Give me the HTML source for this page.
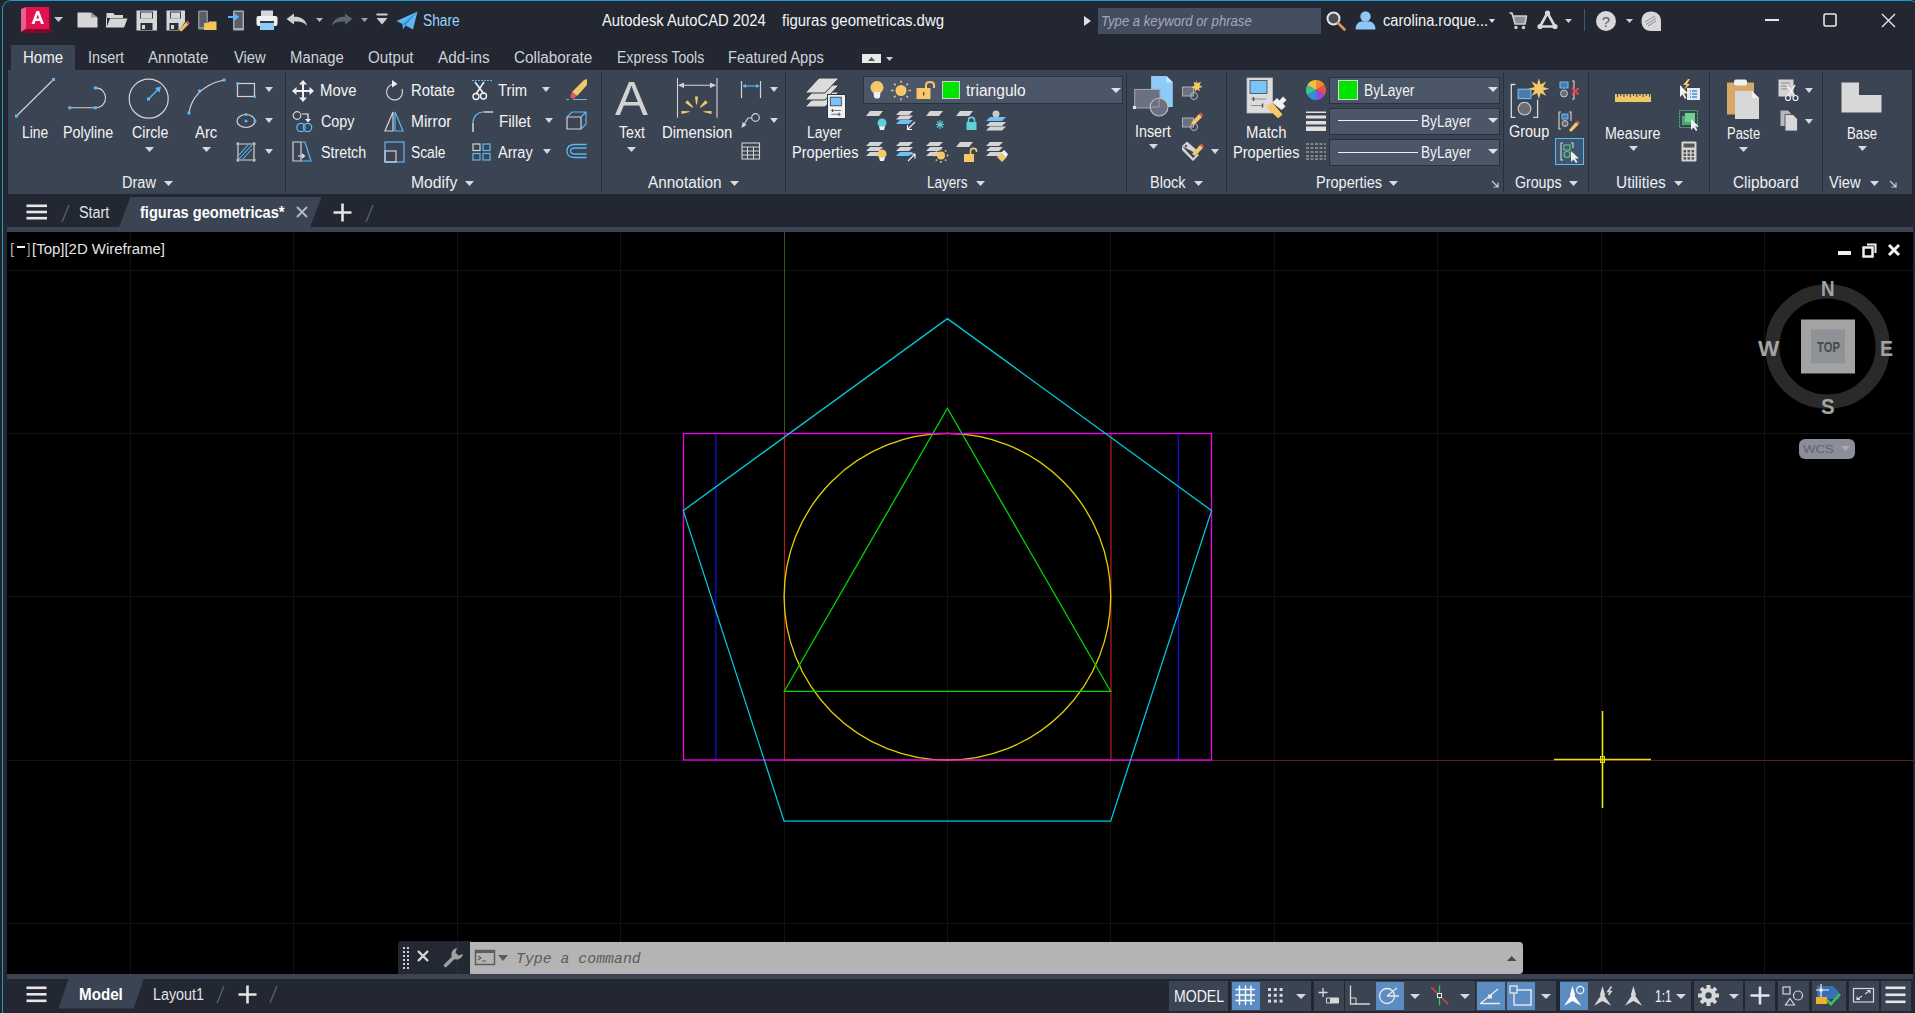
<!DOCTYPE html><html><head><meta charset="utf-8"><style>
html,body{margin:0;padding:0;width:1915px;height:1013px;overflow:hidden;background:#222732;}
.t{position:absolute;white-space:nowrap;transform-origin:0 0;}
.b{position:absolute;}
.s{position:absolute;overflow:visible;}
</style></head><body>
<div class="b" style="left:0px;top:0px;width:1915px;height:1013px;background:#222732;"></div><div class="b" style="left:7px;top:232px;width:1906px;height:742px;background:#000;"></div><div class="b" style="left:8px;top:70px;width:1904px;height:124px;background:#3b4453;"></div><div class="b" style="left:11px;top:45px;width:64px;height:25px;background:#3b4453;"></div><div class="b" style="left:7px;top:227px;width:1906px;height:5px;background:#3b4453;"></div><div class="b" style="left:7px;top:974px;width:1906px;height:5px;background:#3b4453;"></div><div class="b" style="left:0;top:0;width:3px;height:1013px;background:#272524"></div><svg class="s" style="left:0;top:0" width="14" height="14" viewBox="0 0 14 14"><path d="M0 0 H11.5 A9 9 0 0 0 2.5 9 V14 H0 Z" fill="#272524"/></svg><svg class="s" style="left:1900px;top:0" width="15" height="14" viewBox="1900 0 15 14"><path d="M1909 0 H1915 V14 H1918 V9 A9 9 0 0 0 1909 0 Z" fill="#272524"/></svg><div class="b" style="left:2px;top:0px;width:1917px;height:1100px;background:transparent;border-top:1px solid #1c9ad8;border-left:1px solid #1c9ad8;border-right:1px solid #1c9ad8;border-radius:9px 9px 0 0;box-sizing:border-box;"></div><svg class="s" style="left:20px;top:6px;" width="32" height="28" viewBox="0 0 32 28"><polygon points="1,3 6,1 6,23 1,26" fill="#e8608a"/><rect x="6" y="1" width="23" height="22" fill="#e3114f"/><polygon points="6,23 29,23 29,4 31,4 31,27 6,27" fill="#7d0a2a"/><polygon points="1,26 6,23 6,27" fill="#7d0a2a"/><path d="M11.5 18 L16.5 5 L19 5 L24 18 L21 18 L20 15 L15.5 15 L14.5 18 Z M16.3 12.6 L19.2 12.6 L17.75 8.3 Z" fill="#fff"/></svg><svg class="s" style="left:54.3px;top:17.0px;" width="9" height="5" viewBox="0 0 9 5"><polygon points="0,0 9,0 4.5,5" fill="#c8c8c8"/></svg><svg class="s" style="left:77px;top:12px;" width="21" height="16" viewBox="0 0 21 16"><path d="M0.5 0.5 H14 L20.5 5.5 V15.5 H0.5 Z" fill="#d6d6d6"/><path d="M14 0.5 V5.5 H20.5" fill="#9a9a9a"/></svg><svg class="s" style="left:106px;top:12px;" width="22" height="16" viewBox="0 0 22 16"><path d="M0.5 1 H7 L9 3 H17 V6 H0.5 Z" fill="#d6d6d6"/><path d="M0.5 15.5 L4 6.5 H21.5 L18 15.5 Z" fill="#d6d6d6"/><path d="M0.5 6 V15.5" stroke="#d6d6d6"/></svg><svg class="s" style="left:136px;top:10px;" width="22" height="21" viewBox="0 0 22 21"><path d="M0.5 0.5 H21 V20.5 H0.5 Z" fill="#d6d6d6"/><rect x="4" y="1.5" width="13" height="7" fill="#3a4050"/><rect x="5" y="2.5" width="11" height="6" fill="#d6d6d6"/><rect x="4.5" y="13" width="12" height="7" fill="#2a2f3a"/><rect x="6" y="15" width="3" height="4" fill="#d6d6d6"/></svg><svg class="s" style="left:166px;top:10px;" width="23" height="22" viewBox="0 0 23 22"><path d="M0.5 0.5 H19 V12 L13 20.5 H0.5 Z" fill="#d6d6d6"/><rect x="4" y="1.5" width="11" height="7" fill="#3a4050"/><rect x="5" y="2.5" width="9" height="6" fill="#d6d6d6"/><rect x="3.5" y="13" width="9" height="7" fill="#2a2f3a"/><rect x="5" y="15" width="3" height="4" fill="#d6d6d6"/><path d="M13 20 L20 12 L22.5 14.5 L15.5 21.5 Z" fill="#f0c060"/><path d="M20 12 L21.5 10.5 L24 13 L22.5 14.5Z" fill="#e04050"/></svg><svg class="s" style="left:197px;top:10px;" width="20" height="21" viewBox="0 0 20 21"><rect x="1" y="0.5" width="10" height="19" rx="1" fill="#8a8e94"/><rect x="2.5" y="2" width="7" height="15" fill="#5a5e66"/><path d="M7 13 H11 L12 11.5 H19.5 V20 H7 Z" fill="#f4c55a"/></svg><svg class="s" style="left:228px;top:10px;" width="18" height="21" viewBox="0 0 18 21"><rect x="5" y="0.5" width="11" height="20" rx="1" fill="#a8acb2"/><rect x="6.5" y="2" width="8" height="16" fill="#5a5e66"/><path d="M0 7 H9 M6 4 L9.5 7 L6 10" stroke="#5ab4f0" stroke-width="2.2" fill="none"/></svg><svg class="s" style="left:256px;top:10px;" width="22" height="21" viewBox="0 0 22 21"><rect x="5" y="0.5" width="12" height="6" fill="#d6d6d6"/><rect x="0.5" y="6" width="21" height="10" rx="2" fill="#f0f0f0"/><rect x="4" y="11" width="14" height="9" fill="#8ccbf5"/><rect x="4" y="11" width="14" height="2" fill="#333a46"/></svg><svg class="s" style="left:286px;top:13px;" width="22" height="14" viewBox="0 0 22 14"><path d="M0.5 6 L8 0.5 V3.8 C14 3.5 20 6 21 13 C18 9 14 8.5 8 8.5 V11.5 Z" fill="#d0d0d0"/></svg><svg class="s" style="left:315.5px;top:18.0px;" width="7" height="4" viewBox="0 0 7 4"><polygon points="0,0 7,0 3.5,4" fill="#b8b8b8"/></svg><svg class="s" style="left:331px;top:13px;" width="22" height="14" viewBox="0 0 22 14"><path d="M21.5 6 L14 0.5 V3.8 C8 3.5 2 6 1 13 C4 9 8 8.5 14 8.5 V11.5 Z" fill="#5e6470"/></svg><svg class="s" style="left:360.5px;top:18.0px;" width="7" height="4" viewBox="0 0 7 4"><polygon points="0,0 7,0 3.5,4" fill="#a0a0a0"/></svg><svg class="s" style="left:376px;top:13px;" width="12" height="13" viewBox="0 0 12 13"><rect x="0.5" y="0.5" width="11" height="2" fill="#d0d0d0"/><polygon points="0.5,5 11.5,5 6,11.5" fill="#d0d0d0"/></svg><svg class="s" style="left:396px;top:11px;" width="22" height="19" viewBox="0 0 22 19"><path d="M0.5 10 L21.5 0.5 L17 18.5 L9.5 14.5 L7 18.5 L6.5 13 Z" fill="#5cb6f2"/><path d="M6.5 13 L21.5 0.5 L9.5 14.5" fill="#3a8fd0"/></svg><div class="t" style="left:423.00px;top:13.00px;font-size:16px;line-height:16px;color:#9dd3ff;font-weight:normal;font-style:normal;font-family:'Liberation Sans', sans-serif;transform:scaleX(0.8571);">Share</div><div class="t" style="left:602.00px;top:13.00px;font-size:16px;line-height:16px;color:#f4f4f4;font-weight:normal;font-style:normal;font-family:'Liberation Sans', sans-serif;transform:scaleX(0.9249);">Autodesk AutoCAD 2024</div><div class="t" style="left:782.00px;top:13.00px;font-size:16px;line-height:16px;color:#f4f4f4;font-weight:normal;font-style:normal;font-family:'Liberation Sans', sans-serif;transform:scaleX(0.9343);">figuras geometricas.dwg</div><svg class="s" style="left:1084px;top:16px;" width="7" height="10" viewBox="0 0 7 10"><polygon points="0,0 7,5 0,10" fill="#e0e0e0"/></svg><div class="b" style="left:1098px;top:8px;width:223px;height:26px;background:#454e60;"></div><div class="t" style="left:1101.30px;top:13.00px;font-size:15px;line-height:15px;color:#a3a9b4;font-weight:normal;font-style:italic;font-family:'Liberation Sans', sans-serif;transform:scaleX(0.8746);">Type a keyword or phrase</div><svg class="s" style="left:1326px;top:11px;" width="20" height="20" viewBox="0 0 20 20"><circle cx="7.5" cy="7.5" r="6" fill="#4a4f58" stroke="#e6e6e6" stroke-width="2"/><path d="M12 12 L18.5 18.5" stroke="#d79a52" stroke-width="2.6" stroke-linecap="round"/></svg><svg class="s" style="left:1355px;top:11px;" width="21" height="19" viewBox="0 0 21 19"><circle cx="10.5" cy="5.5" r="5.2" fill="#8dc7f7"/><path d="M0.5 18.5 C0.5 13 4 10.5 7 10.5 H14 C17 10.5 20.5 13 20.5 18.5 Z" fill="#8dc7f7"/></svg><div class="t" style="left:1383.30px;top:13.00px;font-size:16px;line-height:16px;color:#f4f4f4;font-weight:normal;font-style:normal;font-family:'Liberation Sans', sans-serif;transform:scaleX(0.9154);">carolina.roque...</div><svg class="s" style="left:1489.3px;top:18.5px;" width="6" height="4" viewBox="0 0 6 4"><polygon points="0,0 6,0 3.0,4" fill="#e0e0e0"/></svg><svg class="s" style="left:1509px;top:12px;" width="18" height="18" viewBox="0 0 18 18"><path d="M0.5 1 H3 L6 12 H16 L17.5 4 H4" fill="#8d9096" stroke="#cfcfcf" stroke-width="1.6" stroke-linejoin="round"/><circle cx="7" cy="15.5" r="1.7" fill="#cfcfcf"/><circle cx="14.5" cy="15.5" r="1.7" fill="#cfcfcf"/></svg><svg class="s" style="left:1537px;top:10px;" width="21" height="20" viewBox="0 0 21 20"><path d="M10.5 3 L3 16.5 H18 Z" fill="none" stroke="#d8d8d8" stroke-width="2.6" stroke-linejoin="round"/><circle cx="10.5" cy="3" r="2.6" fill="#d8d8d8"/><circle cx="3" cy="16.5" r="2.6" fill="#d8d8d8"/><circle cx="18" cy="16.5" r="2.6" fill="#d8d8d8"/></svg><svg class="s" style="left:1564.5px;top:19.0px;" width="7" height="4" viewBox="0 0 7 4"><polygon points="0,0 7,0 3.5,4" fill="#d0d0d0"/></svg><div class="b" style="left:1584px;top:9px;width:1px;height:22px;background:#3c5674;"></div><svg class="s" style="left:1596px;top:11px;" width="21" height="20" viewBox="0 0 21 20"><circle cx="10" cy="10" r="10" fill="#d8d8d8"/><text x="10" y="15.5" text-anchor="middle" font-family="Liberation Sans" font-size="15" fill="#5a5e66">?</text></svg><svg class="s" style="left:1625.8px;top:19.0px;" width="7" height="4" viewBox="0 0 7 4"><polygon points="0,0 7,0 3.5,4" fill="#d0d0d0"/></svg><svg class="s" style="left:1641px;top:11px;" width="21" height="20" viewBox="0 0 21 20"><path d="M10 0.5 C16 0.5 20 4.5 20 10 V20 H10 C4 20 0.5 16 0.5 10 C0.5 4.5 4 0.5 10 0.5Z" fill="#d8d8d8"/><path d="M4 11 L14 5 M5 13.5 L15 7.5 M7 15 L15 10" stroke="#8a8e94" stroke-width="1"/></svg><div class="b" style="left:1765px;top:19px;width:14px;height:2px;background:#e8e8e8;"></div><svg class="s" style="left:1823px;top:13px;" width="14" height="14" viewBox="0 0 14 14"><rect x="1" y="1" width="12" height="12" rx="1.5" fill="none" stroke="#e8e8e8" stroke-width="1.6"/></svg><svg class="s" style="left:1881px;top:13px;" width="15" height="15" viewBox="0 0 15 15"><path d="M1 1 L14 14 M14 1 L1 14" stroke="#e8e8e8" stroke-width="1.4"/></svg><div class="t" style="left:22.90px;top:50.00px;font-size:16px;line-height:16px;color:#f0f0f0;font-weight:normal;font-style:normal;font-family:'Liberation Sans', sans-serif;transform:scaleX(0.9391);">Home</div><div class="t" style="left:88.00px;top:50.00px;font-size:16px;line-height:16px;color:#cfd3d9;font-weight:normal;font-style:normal;font-family:'Liberation Sans', sans-serif;transform:scaleX(0.9000);">Insert</div><div class="t" style="left:148.40px;top:50.00px;font-size:16px;line-height:16px;color:#cfd3d9;font-weight:normal;font-style:normal;font-family:'Liberation Sans', sans-serif;transform:scaleX(0.9407);">Annotate</div><div class="t" style="left:234.30px;top:50.00px;font-size:16px;line-height:16px;color:#cfd3d9;font-weight:normal;font-style:normal;font-family:'Liberation Sans', sans-serif;transform:scaleX(0.9215);">View</div><div class="t" style="left:290.30px;top:50.00px;font-size:16px;line-height:16px;color:#cfd3d9;font-weight:normal;font-style:normal;font-family:'Liberation Sans', sans-serif;transform:scaleX(0.9291);">Manage</div><div class="t" style="left:368.00px;top:50.00px;font-size:16px;line-height:16px;color:#cfd3d9;font-weight:normal;font-style:normal;font-family:'Liberation Sans', sans-serif;transform:scaleX(0.9479);">Output</div><div class="t" style="left:438.30px;top:50.00px;font-size:16px;line-height:16px;color:#cfd3d9;font-weight:normal;font-style:normal;font-family:'Liberation Sans', sans-serif;transform:scaleX(0.9521);">Add-ins</div><div class="t" style="left:513.90px;top:50.00px;font-size:16px;line-height:16px;color:#cfd3d9;font-weight:normal;font-style:normal;font-family:'Liberation Sans', sans-serif;transform:scaleX(0.9548);">Collaborate</div><div class="t" style="left:616.60px;top:50.00px;font-size:16px;line-height:16px;color:#cfd3d9;font-weight:normal;font-style:normal;font-family:'Liberation Sans', sans-serif;transform:scaleX(0.8781);">Express Tools</div><div class="t" style="left:728.00px;top:50.00px;font-size:16px;line-height:16px;color:#cfd3d9;font-weight:normal;font-style:normal;font-family:'Liberation Sans', sans-serif;transform:scaleX(0.9212);">Featured Apps</div><div class="b" style="left:862px;top:54px;width:19px;height:9px;background:#e8e8e8;"></div><svg class="s" style="left:868px;top:56.5px;" width="7" height="4" viewBox="0 0 7 4"><polygon points="0,4 7,4 3.5,0" fill="#555"/></svg><svg class="s" style="left:885.5px;top:56.5px;" width="7" height="4" viewBox="0 0 7 4"><polygon points="0,0 7,0 3.5,4" fill="#d0d0d0"/></svg><div class="b" style="left:285px;top:72px;width:1px;height:120px;background:#2a303b;"></div><div class="b" style="left:601px;top:72px;width:1px;height:120px;background:#2a303b;"></div><div class="b" style="left:785px;top:72px;width:1px;height:120px;background:#2a303b;"></div><div class="b" style="left:1126px;top:72px;width:1px;height:120px;background:#2a303b;"></div><div class="b" style="left:1226px;top:72px;width:1px;height:120px;background:#2a303b;"></div><div class="b" style="left:1503px;top:72px;width:1px;height:120px;background:#2a303b;"></div><div class="b" style="left:1588px;top:72px;width:1px;height:120px;background:#2a303b;"></div><div class="b" style="left:1709px;top:72px;width:1px;height:120px;background:#2a303b;"></div><div class="b" style="left:1822px;top:72px;width:1px;height:120px;background:#2a303b;"></div><div class="t" style="left:121.90px;top:175.00px;font-size:16px;line-height:16px;color:#eef0f2;font-weight:normal;font-style:normal;font-family:'Liberation Sans', sans-serif;transform:scaleX(0.9091);">Draw</div><svg class="s" style="left:163.5px;top:181.0px;" width="9" height="5" viewBox="0 0 9 5"><polygon points="0,0 9,0 4.5,5" fill="#dcdcdc"/></svg><div class="t" style="left:411.30px;top:175.00px;font-size:16px;line-height:16px;color:#eef0f2;font-weight:normal;font-style:normal;font-family:'Liberation Sans', sans-serif;transform:scaleX(0.9809);">Modify</div><svg class="s" style="left:465.1px;top:181.0px;" width="9" height="5" viewBox="0 0 9 5"><polygon points="0,0 9,0 4.5,5" fill="#dcdcdc"/></svg><div class="t" style="left:647.50px;top:175.00px;font-size:16px;line-height:16px;color:#eef0f2;font-weight:normal;font-style:normal;font-family:'Liberation Sans', sans-serif;transform:scaleX(0.9608);">Annotation</div><svg class="s" style="left:729.7px;top:181.0px;" width="9" height="5" viewBox="0 0 9 5"><polygon points="0,0 9,0 4.5,5" fill="#dcdcdc"/></svg><div class="t" style="left:927.40px;top:175.00px;font-size:16px;line-height:16px;color:#eef0f2;font-weight:normal;font-style:normal;font-family:'Liberation Sans', sans-serif;transform:scaleX(0.8458);">Layers</div><svg class="s" style="left:975.5px;top:181.0px;" width="9" height="5" viewBox="0 0 9 5"><polygon points="0,0 9,0 4.5,5" fill="#dcdcdc"/></svg><div class="t" style="left:1150.00px;top:175.00px;font-size:16px;line-height:16px;color:#eef0f2;font-weight:normal;font-style:normal;font-family:'Liberation Sans', sans-serif;transform:scaleX(0.9056);">Block</div><svg class="s" style="left:1193.7px;top:181.0px;" width="9" height="5" viewBox="0 0 9 5"><polygon points="0,0 9,0 4.5,5" fill="#dcdcdc"/></svg><div class="t" style="left:1315.60px;top:175.00px;font-size:16px;line-height:16px;color:#eef0f2;font-weight:normal;font-style:normal;font-family:'Liberation Sans', sans-serif;transform:scaleX(0.9067);">Properties</div><svg class="s" style="left:1388.9px;top:181.0px;" width="9" height="5" viewBox="0 0 9 5"><polygon points="0,0 9,0 4.5,5" fill="#dcdcdc"/></svg><div class="t" style="left:1514.50px;top:175.00px;font-size:16px;line-height:16px;color:#eef0f2;font-weight:normal;font-style:normal;font-family:'Liberation Sans', sans-serif;transform:scaleX(0.8857);">Groups</div><svg class="s" style="left:1568.5px;top:181.0px;" width="9" height="5" viewBox="0 0 9 5"><polygon points="0,0 9,0 4.5,5" fill="#dcdcdc"/></svg><div class="t" style="left:1615.50px;top:175.00px;font-size:16px;line-height:16px;color:#eef0f2;font-weight:normal;font-style:normal;font-family:'Liberation Sans', sans-serif;transform:scaleX(0.9632);">Utilities</div><svg class="s" style="left:1673.5px;top:181.0px;" width="9" height="5" viewBox="0 0 9 5"><polygon points="0,0 9,0 4.5,5" fill="#dcdcdc"/></svg><div class="t" style="left:1733.00px;top:175.00px;font-size:16px;line-height:16px;color:#eef0f2;font-weight:normal;font-style:normal;font-family:'Liberation Sans', sans-serif;transform:scaleX(0.9591);">Clipboard</div><div class="t" style="left:1829.30px;top:175.00px;font-size:16px;line-height:16px;color:#eef0f2;font-weight:normal;font-style:normal;font-family:'Liberation Sans', sans-serif;transform:scaleX(0.9157);">View</div><svg class="s" style="left:1869.5px;top:181.0px;" width="9" height="5" viewBox="0 0 9 5"><polygon points="0,0 9,0 4.5,5" fill="#dcdcdc"/></svg><svg class="s" style="left:1491px;top:180px;" width="8" height="8" viewBox="0 0 8 8"><path d="M1 1 L7 7 M7 2.5 V7 H2.5" stroke="#cfcfcf" stroke-width="1.2" fill="none"/></svg><svg class="s" style="left:1889px;top:180px;" width="8" height="8" viewBox="0 0 8 8"><path d="M1 1 L7 7 M7 2.5 V7 H2.5" stroke="#cfcfcf" stroke-width="1.2" fill="none"/></svg><svg class="s" style="left:14px;top:77px;" width="42" height="42" viewBox="0 0 42 42"><line x1="2.5" y1="39" x2="39.5" y2="2.5" stroke="#d4d4d4" stroke-width="1.2"/><rect x="1.0" y="37.5" width="3" height="3" fill="#5ab8f5"/><rect x="38.0" y="1.0" width="3" height="3" fill="#5ab8f5"/></svg><div class="t" style="left:21.50px;top:125.00px;font-size:16px;line-height:16px;color:#f4f4f4;font-weight:normal;font-style:normal;font-family:'Liberation Sans', sans-serif;transform:scaleX(0.8680);">Line</div><svg class="s" style="left:66px;top:82px;" width="44" height="30" viewBox="0 0 44 30"><path d="M3.7 25.8 H29 M29.3 5.9 C43 5.9 43 25.8 29.3 25.8" fill="none" stroke="#d4d4d4" stroke-width="1.1"/><rect x="2.2" y="24.3" width="3" height="3" fill="#5ab8f5"/><rect x="27.8" y="24.3" width="3" height="3" fill="#5ab8f5"/><rect x="27.8" y="4.4" width="3" height="3" fill="#5ab8f5"/></svg><div class="t" style="left:62.70px;top:125.00px;font-size:16px;line-height:16px;color:#f4f4f4;font-weight:normal;font-style:normal;font-family:'Liberation Sans', sans-serif;transform:scaleX(0.8946);">Polyline</div><svg class="s" style="left:128px;top:77px;" width="42" height="42" viewBox="0 0 42 42"><circle cx="20.7" cy="21.7" r="19.5" fill="none" stroke="#d4d4d4" stroke-width="1.2"/><path d="M20.5 22 L31 11.5" stroke="#5ab8f5" stroke-width="1.4"/><polygon points="33,9.5 27,11 31.5,15.5" fill="#5ab8f5"/><rect x="19.0" y="20.5" width="3" height="3" fill="#5ab8f5"/></svg><div class="t" style="left:131.60px;top:125.00px;font-size:16px;line-height:16px;color:#f4f4f4;font-weight:normal;font-style:normal;font-family:'Liberation Sans', sans-serif;transform:scaleX(0.8900);">Circle</div><svg class="s" style="left:144.5px;top:146.5px;" width="9" height="5" viewBox="0 0 9 5"><polygon points="0,0 9,0 4.5,5" fill="#d8d8d8"/></svg><svg class="s" style="left:185px;top:77px;" width="44" height="42" viewBox="0 0 44 42"><path d="M4 36 C6 22 16 8 39 3" fill="none" stroke="#d4d4d4" stroke-width="1.2"/><rect x="2.5" y="34.5" width="3" height="3" fill="#5ab8f5"/><rect x="13.0" y="12.5" width="3" height="3" fill="#5ab8f5"/><rect x="37.5" y="1.5" width="3" height="3" fill="#5ab8f5"/></svg><div class="t" style="left:195.00px;top:125.00px;font-size:16px;line-height:16px;color:#f4f4f4;font-weight:normal;font-style:normal;font-family:'Liberation Sans', sans-serif;transform:scaleX(0.9292);">Arc</div><svg class="s" style="left:201.5px;top:146.5px;" width="9" height="5" viewBox="0 0 9 5"><polygon points="0,0 9,0 4.5,5" fill="#d8d8d8"/></svg><svg class="s" style="left:235px;top:81px;" width="22" height="18" viewBox="0 0 22 18"><rect x="2.5" y="2.5" width="17" height="13" fill="none" stroke="#d4d4d4" stroke-width="1.2"/><rect x="1.2" y="1.2" width="2.6" height="2.6" fill="#5ab8f5"/><rect x="18.2" y="14.2" width="2.6" height="2.6" fill="#5ab8f5"/></svg><svg class="s" style="left:265.0px;top:86.8px;" width="8" height="5" viewBox="0 0 8 5"><polygon points="0,0 8,0 4.0,5" fill="#d8d8d8"/></svg><svg class="s" style="left:235px;top:112px;" width="22" height="18" viewBox="0 0 22 18"><ellipse cx="11" cy="9" rx="9" ry="6.5" fill="none" stroke="#d4d4d4" stroke-width="1.2"/><rect x="9.7" y="7.7" width="2.6" height="2.6" fill="#5ab8f5"/><rect x="9.7" y="1.2" width="2.6" height="2.6" fill="#5ab8f5"/><rect x="18.7" y="7.7" width="2.6" height="2.6" fill="#5ab8f5"/></svg><svg class="s" style="left:265.0px;top:117.8px;" width="8" height="5" viewBox="0 0 8 5"><polygon points="0,0 8,0 4.0,5" fill="#d8d8d8"/></svg><svg class="s" style="left:235px;top:141px;" width="22" height="22" viewBox="0 0 22 22"><path d="M3 1 V21 M19 1 V21 M1 3 H21 M1 19 H21" stroke="#d4d4d4" stroke-width="1.2"/><path d="M4 14 L13 4 M4 18 L17 4 M8 18 L17 8" stroke="#5ab8f5" stroke-width="1.1"/></svg><svg class="s" style="left:265.0px;top:148.8px;" width="8" height="5" viewBox="0 0 8 5"><polygon points="0,0 8,0 4.0,5" fill="#d8d8d8"/></svg><svg class="s" style="left:292px;top:80px;" width="22" height="22" viewBox="0 0 22 22"><path d="M11 1 V21 M1 11 H21" stroke="#f0f0f0" stroke-width="2"/><polygon points="11,0 7,4.5 15,4.5" fill="#f0f0f0"/><polygon points="11,22 7,17.5 15,17.5" fill="#f0f0f0"/><polygon points="0,11 4.5,7 4.5,15" fill="#f0f0f0"/><polygon points="22,11 17.5,7 17.5,15" fill="#f0f0f0"/></svg><div class="t" style="left:319.60px;top:83.00px;font-size:16px;line-height:16px;color:#f4f4f4;font-weight:normal;font-style:normal;font-family:'Liberation Sans', sans-serif;transform:scaleX(0.9309);">Move</div><svg class="s" style="left:384px;top:79px;" width="21" height="22" viewBox="0 0 21 22"><path d="M9.5 5 A8 8 0 1 0 18 10" fill="none" stroke="#d4d4d4" stroke-width="1.2"/><polygon points="8,1 13.5,5 8,8.5" fill="#f0f0f0"/></svg><div class="t" style="left:411.30px;top:83.00px;font-size:16px;line-height:16px;color:#f4f4f4;font-weight:normal;font-style:normal;font-family:'Liberation Sans', sans-serif;transform:scaleX(0.9278);">Rotate</div><svg class="s" style="left:471px;top:79px;" width="23" height="22" viewBox="0 0 23 22"><path d="M1 1.5 H22" stroke="#5ab8f5" stroke-width="1.2" stroke-dasharray="2 1"/><path d="M4 3 L13 15 M13 3 L5 15" stroke="#f0f0f0" stroke-width="1.6"/><circle cx="5" cy="17.5" r="3" fill="none" stroke="#f0f0f0" stroke-width="1.4"/><circle cx="12.5" cy="17" r="3" fill="none" stroke="#f0f0f0" stroke-width="1.4"/></svg><div class="t" style="left:498.00px;top:83.00px;font-size:16px;line-height:16px;color:#f4f4f4;font-weight:normal;font-style:normal;font-family:'Liberation Sans', sans-serif;transform:scaleX(0.9236);">Trim</div><svg class="s" style="left:541.5px;top:87.0px;" width="8" height="5" viewBox="0 0 8 5"><polygon points="0,0 8,0 4.0,5" fill="#d8d8d8"/></svg><svg class="s" style="left:566px;top:79px;" width="22" height="22" viewBox="0 0 22 22"><path d="M21 0 L21 6 L11 17 L6 13 L18 1 Z" fill="#f0c868"/><path d="M6 13 L11 17 L8 19.5 C6 20.5 4 19 4.5 16.5Z" fill="#e8505a"/><path d="M0 20.5 H3 M7 20.5 H21" stroke="#5ab8f5" stroke-width="1.2"/></svg><svg class="s" style="left:292px;top:111px;" width="22" height="22" viewBox="0 0 22 22"><circle cx="5" cy="4.5" r="3.8" fill="none" stroke="#d4d4d4" stroke-width="1.2"/><path d="M10 3 H16 V9" fill="none" stroke="#f0f0f0" stroke-width="1.2"/><polygon points="13,8 19,8 16,11.5" fill="#f0f0f0"/><circle cx="9" cy="16.5" r="4.2" fill="none" stroke="#5ab8f5" stroke-width="1.3"/><circle cx="15.5" cy="16.5" r="4.2" fill="none" stroke="#5ab8f5" stroke-width="1.3"/></svg><div class="t" style="left:320.50px;top:114.00px;font-size:16px;line-height:16px;color:#f4f4f4;font-weight:normal;font-style:normal;font-family:'Liberation Sans', sans-serif;transform:scaleX(0.8957);">Copy</div><svg class="s" style="left:384px;top:111px;" width="20" height="21" viewBox="0 0 20 21"><path d="M9 1 L1 20 H9 Z" fill="none" stroke="#d4d4d4" stroke-width="1.2"/><path d="M11 1 L19 20 H11 Z" fill="none" stroke="#5ab8f5" stroke-width="1.2"/></svg><div class="t" style="left:410.50px;top:114.00px;font-size:16px;line-height:16px;color:#f4f4f4;font-weight:normal;font-style:normal;font-family:'Liberation Sans', sans-serif;transform:scaleX(0.9689);">Mirror</div><svg class="s" style="left:472px;top:111px;" width="22" height="22" viewBox="0 0 22 22"><path d="M1 21 V12 C1 6 5 1 12 1 H21" fill="none" stroke="#5ab8f5" stroke-width="1.2"/><path d="M12 1 H21" stroke="#d4d4d4" stroke-width="1.2"/><path d="M1 12 V21" stroke="#d4d4d4" stroke-width="1.2"/></svg><div class="t" style="left:499.20px;top:114.00px;font-size:16px;line-height:16px;color:#f4f4f4;font-weight:normal;font-style:normal;font-family:'Liberation Sans', sans-serif;transform:scaleX(0.9408);">Fillet</div><svg class="s" style="left:545.0px;top:118.0px;" width="8" height="5" viewBox="0 0 8 5"><polygon points="0,0 8,0 4.0,5" fill="#d8d8d8"/></svg><svg class="s" style="left:566px;top:111px;" width="22" height="19" viewBox="0 0 22 19"><path d="M1 6 H15 V18 H1 Z" fill="none" stroke="#d4d4d4" stroke-width="1.2"/><path d="M1 6 L6 1 H20 V13 L15 18 M15 6 L20 1" fill="none" stroke="#5ab8f5" stroke-width="1.2"/></svg><svg class="s" style="left:292px;top:141px;" width="22" height="22" viewBox="0 0 22 22"><path d="M1 1 H9 V20 H1 Z" fill="none" stroke="#d4d4d4" stroke-width="1.2"/><path d="M9 1 H13 L19 20 H9" fill="none" stroke="#5ab8f5" stroke-width="1.2"/><path d="M6 15 H12 M10 13 L12.5 15 L10 17" stroke="#f0f0f0" stroke-width="1.1" fill="none"/></svg><div class="t" style="left:320.50px;top:145.00px;font-size:16px;line-height:16px;color:#f4f4f4;font-weight:normal;font-style:normal;font-family:'Liberation Sans', sans-serif;transform:scaleX(0.8915);">Stretch</div><svg class="s" style="left:384px;top:141px;" width="21" height="22" viewBox="0 0 21 22"><rect x="1" y="1" width="19" height="20" fill="none" stroke="#5ab8f5" stroke-width="1.2"/><rect x="1" y="10" width="11" height="11" fill="none" stroke="#d4d4d4" stroke-width="1.2"/></svg><div class="t" style="left:410.50px;top:145.00px;font-size:16px;line-height:16px;color:#f4f4f4;font-weight:normal;font-style:normal;font-family:'Liberation Sans', sans-serif;transform:scaleX(0.8625);">Scale</div><svg class="s" style="left:472px;top:143px;" width="20" height="18" viewBox="0 0 20 18"><rect x="1" y="1" width="7" height="6.5" fill="none" stroke="#d4d4d4" stroke-width="1.2"/><rect x="11" y="1" width="7" height="6.5" fill="none" stroke="#5ab8f5" stroke-width="1.2"/><rect x="1" y="10.5" width="7" height="6.5" fill="none" stroke="#5ab8f5" stroke-width="1.2"/><rect x="11" y="10.5" width="7" height="6.5" fill="none" stroke="#5ab8f5" stroke-width="1.2"/></svg><div class="t" style="left:498.30px;top:145.00px;font-size:16px;line-height:16px;color:#f4f4f4;font-weight:normal;font-style:normal;font-family:'Liberation Sans', sans-serif;transform:scaleX(0.9084);">Array</div><svg class="s" style="left:543.0px;top:149.0px;" width="8" height="5" viewBox="0 0 8 5"><polygon points="0,0 8,0 4.0,5" fill="#d8d8d8"/></svg><svg class="s" style="left:566px;top:143px;" width="22" height="16" viewBox="0 0 22 16"><path d="M20.5 1.5 H9 C4 1.5 1 4 1 8 C1 12 4 14.5 9 14.5 H20.5" fill="none" stroke="#5ab8f5" stroke-width="1.3"/><path d="M20.5 5 H9 C6 5 4.5 6.5 4.5 8 C4.5 9.5 6 11 9 11 H20.5" fill="none" stroke="#5ab8f5" stroke-width="1.3"/></svg><div class="t" style="left:614.60px;top:75.00px;font-size:48px;line-height:48px;color:#d2d2d2;font-weight:normal;font-style:normal;font-family:'Liberation Sans', sans-serif;transform:scaleX(1.0281);">A</div><div class="t" style="left:619.00px;top:125.00px;font-size:16px;line-height:16px;color:#f4f4f4;font-weight:normal;font-style:normal;font-family:'Liberation Sans', sans-serif;transform:scaleX(0.8840);">Text</div><svg class="s" style="left:626.5px;top:146.5px;" width="9" height="5" viewBox="0 0 9 5"><polygon points="0,0 9,0 4.5,5" fill="#d8d8d8"/></svg><svg class="s" style="left:676px;top:77px;" width="43" height="42" viewBox="0 0 43 42"><path d="M1.5 1 V40.8 M41 1 V40.8" stroke="#d4d4d4" stroke-width="1.1"/><path d="M3 8.3 H39" stroke="#d4d4d4" stroke-width="1.1"/><polygon points="2,8.3 8,5.5 8,11" fill="#d4d4d4"/><polygon points="40,8.3 34,5.5 34,11" fill="#d4d4d4"/><polygon points="19,19.5 22,19.5 21,27.5 20,27.5" fill="#f6c86a"/><polygon points="9.2,25.8 11.6,23.2 17.2,30 16.4,30.8" fill="#f6c86a"/><polygon points="31.8,25.8 29.4,23.2 23.8,30 24.6,30.8" fill="#f6c86a"/><polygon points="5.5,34 5.5,37 13.5,35 13.5,34.2" fill="#f6c86a"/><polygon points="35.5,34 35.5,37 27.5,35 27.5,34.2" fill="#f6c86a"/></svg><div class="t" style="left:661.70px;top:125.00px;font-size:16px;line-height:16px;color:#f4f4f4;font-weight:normal;font-style:normal;font-family:'Liberation Sans', sans-serif;transform:scaleX(0.9299);">Dimension</div><svg class="s" style="left:740px;top:80px;" width="22" height="19" viewBox="0 0 22 19"><path d="M1.5 1 V18 M20.5 1 V18" stroke="#d4d4d4" stroke-width="1.2"/><path d="M3 6 H19" stroke="#5ab8f5" stroke-width="1.2"/><polygon points="2.5,6 6,4 6,8" fill="#5ab8f5"/><polygon points="19.5,6 16,4 16,8" fill="#5ab8f5"/></svg><svg class="s" style="left:770.0px;top:87.0px;" width="8" height="5" viewBox="0 0 8 5"><polygon points="0,0 8,0 4.0,5" fill="#d8d8d8"/></svg><svg class="s" style="left:741px;top:112px;" width="20" height="17" viewBox="0 0 20 17"><circle cx="14.5" cy="5.5" r="3.8" fill="none" stroke="#d4d4d4" stroke-width="1.2"/><path d="M11 6 L7 6 L2 14" fill="none" stroke="#d4d4d4" stroke-width="1.2"/><polygon points="0.5,16 1.5,10 5.5,13" fill="#d4d4d4"/></svg><svg class="s" style="left:770.0px;top:118.0px;" width="8" height="5" viewBox="0 0 8 5"><polygon points="0,0 8,0 4.0,5" fill="#d8d8d8"/></svg><svg class="s" style="left:741px;top:142px;" width="20" height="18" viewBox="0 0 20 18"><rect x="1" y="1" width="17.5" height="16" fill="none" stroke="#d4d4d4" stroke-width="1.1"/><path d="M1 5 H18.5 M1 9 H18.5 M1 13 H18.5 M6.5 5 V17 M12.5 5 V17" stroke="#d4d4d4" stroke-width="1"/></svg><svg class="s" style="left:804px;top:77px;" width="43" height="42" viewBox="0 0 43 42"><g stroke="#2e3542" stroke-width="1" fill="#dcdcdc"><polygon points="15,15 35,15 21,30 1,30"/><polygon points="15,8 35,8 21,23 1,23"/><polygon points="15,1 35.1,1 20.9,16 1,16"/></g><rect x="23.5" y="17.5" width="18" height="24" fill="#f0f0f0" stroke="#2e3542" stroke-width="1"/><rect x="26.3" y="20.2" width="11" height="8.6" fill="#76c4fa" stroke="#333" stroke-width="0.8"/><path d="M27.3 33.5 H36.8 M27.3 37.3 H36.8" stroke="#666" stroke-width="0.9"/><path d="M28.5 32 V35 M35 35.8 V38.8" stroke="#555" stroke-width="1.3"/></svg><div class="t" style="left:807.30px;top:125.00px;font-size:16px;line-height:16px;color:#f4f4f4;font-weight:normal;font-style:normal;font-family:'Liberation Sans', sans-serif;transform:scaleX(0.8675);">Layer</div><div class="t" style="left:791.50px;top:145.00px;font-size:16px;line-height:16px;color:#f4f4f4;font-weight:normal;font-style:normal;font-family:'Liberation Sans', sans-serif;transform:scaleX(0.9122);">Properties</div><div class="b" style="left:863px;top:76px;width:260px;height:28px;background:#4b5669;border:1px solid #2b313c;box-sizing:border-box;"></div><svg class="s" style="left:870px;top:81px;" width="15" height="19" viewBox="0 0 15 19"><circle cx="7" cy="6.5" r="6.5" fill="#f6c86a"/><path d="M3.5 11 H10.5 L10 16 C9 18 5 18 4 16Z" fill="#f0f0f0"/></svg><svg class="s" style="left:890px;top:80px;" width="22" height="21" viewBox="0 0 22 21"><circle cx="11" cy="10.5" r="5.5" fill="#f6c86a"/><line x1="18.5" y1="10.5" x2="21.0" y2="10.5" stroke="#f6c86a" stroke-width="1.3"/><line x1="16.305412018753998" y1="15.801188858290246" x2="18.073882691671997" y2="17.56825181105366" stroke="#f6c86a" stroke-width="1.3"/><line x1="11.0059724503305" y1="17.99999762198876" x2="11.007963267107332" y2="20.49999682931835" stroke="#f6c86a" stroke-width="1.3"/><line x1="5.703037663849961" y1="15.809631814863241" x2="3.9373835517999485" y2="17.57950908648432" stroke="#f6c86a" stroke-width="1.3"/><line x1="3.5000095120434533" y1="10.51194489687365" x2="1.0000126827246056" y2="10.515926529164869" stroke="#f6c86a" stroke-width="1.3"/><line x1="5.686151756057954" y1="5.207267544986425" x2="3.9148690080772717" y2="3.443023393315233" stroke="#f6c86a" stroke-width="1.3"/><line x1="10.982082664157888" y1="3.0000214020921154" x2="10.976110218877185" y2="0.5000285361228194" stroke="#f6c86a" stroke-width="1.3"/><line x1="16.28849921756317" y1="5.181938696683374" x2="18.05133229008423" y2="3.4092515955778318" stroke="#f6c86a" stroke-width="1.3"/></svg><svg class="s" style="left:916px;top:80px;" width="20" height="20" viewBox="0 0 20 20"><rect x="0.5" y="8" width="14" height="11" fill="#f6c86a"/><path d="M10 8 V5 C10 1 18 1 18 5 V8" fill="none" stroke="#f6c86a" stroke-width="2"/><rect x="7" y="12" width="1.3" height="3.5" fill="#5a4a2a"/></svg><div class="b" style="left:942px;top:81px;width:18px;height:18px;background:#00e400;border:1px solid #d0d0d0;box-sizing:border-box;"></div><div class="t" style="left:966.10px;top:83.00px;font-size:16px;line-height:16px;color:#f4f4f4;font-weight:normal;font-style:normal;font-family:'Liberation Sans', sans-serif;transform:scaleX(0.9723);">triangulo</div><svg class="s" style="left:1111.0px;top:88.0px;" width="10" height="5" viewBox="0 0 10 5"><polygon points="0,0 10,0 5.0,5" fill="#e0e0e0"/></svg><svg class="s" style="left:866px;top:110px;" width="22" height="21" viewBox="0 0 22 21"><polygon points="4,1 17,1 13,6 0,6" fill="#d4d4d4"/><circle cx="16" cy="13" r="4.5" fill="#5fd0d8"/><path d="M13 16.5 H19 L18 20 H14 Z" fill="#f0f0f0"/></svg><svg class="s" style="left:896px;top:110px;" width="22" height="21" viewBox="0 0 22 21"><polygon points="4,1 17,1 13,5 0,5" fill="#d4d4d4"/><polygon points="4,5.5 17,5.5 13,9.5 0,9.5" fill="#d4d4d4"/><polygon points="4,10 17,10 13,14 0,14" fill="#6fc0f5"/><path d="M19 12 L12 19 M11.5 15 V19.5 H16" stroke="#f0f0f0" stroke-width="1.2" fill="none"/></svg><svg class="s" style="left:926px;top:110px;" width="22" height="21" viewBox="0 0 22 21"><polygon points="4,1 17,1 13,6 0,6" fill="#d4d4d4"/><g stroke="#5fd0d8" stroke-width="1.1"><path d="M14 10 V19 M10 14.5 H18 M11 11.5 L17 17.5 M17 11.5 L11 17.5"/></g></svg><svg class="s" style="left:956px;top:110px;" width="22" height="21" viewBox="0 0 22 21"><polygon points="4,1 17,1 13,6 0,6" fill="#d4d4d4"/><rect x="10.5" y="12" width="10" height="8" fill="#5fd0d8"/><path d="M12.5 12 V10 C12.5 6.5 18.5 6.5 18.5 10 V12" fill="none" stroke="#5fd0d8" stroke-width="1.6"/></svg><svg class="s" style="left:986px;top:110px;" width="22" height="21" viewBox="0 0 22 21"><circle cx="10" cy="4" r="3.5" fill="#c8c8c8"/><polygon points="4,7 20,7 16,11 0,11" fill="#6fc0f5"/><polygon points="4,12 20,12 16,16 0,16" fill="#d4d4d4"/><polygon points="4,16.5 20,16.5 16,20.5 0,20.5" fill="#d4d4d4"/></svg><svg class="s" style="left:866px;top:141px;" width="22" height="22" viewBox="0 0 22 22"><polygon points="4,1 17,1 13,5 0,5" fill="#d4d4d4"/><polygon points="4,6 17,6 13,10 0,10" fill="#d4d4d4"/><polygon points="4,11 17,11 13,15 0,15" fill="#d4d4d4"/><circle cx="16" cy="13" r="4.5" fill="#f6c86a"/><path d="M13 16.5 H19 L18 20 H14 Z" fill="#f0f0f0"/></svg><svg class="s" style="left:896px;top:141px;" width="22" height="22" viewBox="0 0 22 22"><polygon points="4,1 17,1 13,5 0,5" fill="#d4d4d4"/><polygon points="4,6 17,6 13,10 0,10" fill="#d4d4d4"/><polygon points="4,11 17,11 13,15 0,15" fill="#6fc0f5"/><path d="M12 20 L19 13 M14.5 13 H19 V17.5" stroke="#f0f0f0" stroke-width="1.2" fill="none"/></svg><svg class="s" style="left:926px;top:141px;" width="22" height="22" viewBox="0 0 22 22"><polygon points="4,1 17,1 13,5 0,5" fill="#d4d4d4"/><polygon points="4,6 17,6 13,10 0,10" fill="#d4d4d4"/><polygon points="4,11 17,11 13,15 0,15" fill="#d4d4d4"/><circle cx="15" cy="14.5" r="4" fill="#f6c86a"/><circle cx="21.5" cy="14.5" r="0.9" fill="#f6c86a"/><circle cx="19.598023749586797" cy="19.09436367718488" r="0.9" fill="#f6c86a"/><circle cx="15.005176123619766" cy="20.999997939056925" r="0.9" fill="#f6c86a"/><circle cx="10.409299308669965" cy="19.10168090621481" r="0.9" fill="#f6c86a"/><circle cx="8.500008243770992" cy="14.510352243957165" r="0.9" fill="#f6c86a"/><circle cx="10.394664855250227" cy="9.912965205654901" r="0.9" fill="#f6c86a"/><circle cx="14.98447164227017" cy="8.000018548479833" r="0.9" fill="#f6c86a"/><circle cx="19.583365988554746" cy="9.891013537125591" r="0.9" fill="#f6c86a"/></svg><svg class="s" style="left:956px;top:141px;" width="22" height="22" viewBox="0 0 22 22"><polygon points="4,1 17,1 13,6 0,6" fill="#d4d4d4"/><rect x="8" y="13" width="10" height="8" fill="#f6c86a"/><path d="M14.5 13 V10 C14.5 6.5 20.5 6.5 20.5 10 V11" fill="none" stroke="#f6c86a" stroke-width="1.6"/></svg><svg class="s" style="left:986px;top:141px;" width="22" height="22" viewBox="0 0 22 22"><polygon points="4,1 17,1 13,5 0,5" fill="#d4d4d4"/><polygon points="4,6 17,6 13,10 0,10" fill="#d4d4d4"/><polygon points="4,11 17,11 13,15 0,15" fill="#d4d4d4"/><path d="M11 16 L15 12 L20 17 L16 21 Z" fill="#f6c86a"/><path d="M15 12 L18 9 L22 13 L20 17Z" fill="#f0f0f0"/></svg><svg class="s" style="left:1132px;top:75px;" width="42" height="42" viewBox="0 0 42 42"><path d="M19.1 1 H34.5 L40.8 7.3 V32.1 H19.1 Z" fill="#8dcbf8"/><path d="M34.5 1 V7.3 H40.8 Z" fill="#cfe8fb"/><rect x="2.7" y="14.4" width="25.3" height="18.6" fill="#6a7282" stroke="#a8a8a8" stroke-width="1"/><circle cx="27.1" cy="32.1" r="8.9" fill="#6a7080" stroke="#c0c0c0" stroke-width="1.1"/><path d="M27.1 23.2 V32.1 H18.2" fill="none" stroke="#a8a8a8" stroke-width="0.9"/><rect x="0.9" y="31" width="3" height="3" fill="#e8e8e8"/></svg><div class="t" style="left:1135.40px;top:124.00px;font-size:16px;line-height:16px;color:#f4f4f4;font-weight:normal;font-style:normal;font-family:'Liberation Sans', sans-serif;transform:scaleX(0.8950);">Insert</div><svg class="s" style="left:1148.5px;top:144.0px;" width="9" height="5" viewBox="0 0 9 5"><polygon points="0,0 9,0 4.5,5" fill="#d8d8d8"/></svg><svg class="s" style="left:1181px;top:80px;" width="22" height="21" viewBox="0 0 22 21"><rect x="1.5" y="7" width="11" height="9" fill="#6a7282" stroke="#b0b0b0" stroke-width="1"/><circle cx="13" cy="16" r="3.5" fill="none" stroke="#b8b8b8" stroke-width="1"/><polygon points="15,0 16.5,3 20,2 18.5,5 21.5,7 18,8 19,11 16,9.5 14,12 13.5,8.5 10.5,7.5 13.5,5.5 12.5,2 15.5,3" fill="#f6c86a"/></svg><svg class="s" style="left:1181px;top:111px;" width="22" height="21" viewBox="0 0 22 21"><rect x="1.5" y="7" width="11" height="9" fill="#6a7282" stroke="#b0b0b0" stroke-width="1"/><circle cx="13" cy="16" r="3.5" fill="none" stroke="#b8b8b8" stroke-width="1"/><path d="M10 12 L18 3 L21 6 L13 14 Z" fill="#f6c86a"/><path d="M18 3 L19.5 1.5 L22 4 L21 6 Z" fill="#e8505a"/></svg><svg class="s" style="left:1181px;top:141px;" width="22" height="22" viewBox="0 0 22 22"><path d="M1 5 L6 0.5 L18 11 L12 17 Z M1 5 V9 L12 20 L18 14" fill="#d4d4d4"/><circle cx="5" cy="5" r="1.2" fill="#555"/><path d="M11 13 L19 4 L22 7 L14 15 Z" fill="#f6c86a"/><path d="M19 4 L20.5 2.5 L23 5 L22 7 Z" fill="#e8505a"/></svg><svg class="s" style="left:1211.0px;top:149.0px;" width="8" height="5" viewBox="0 0 8 5"><polygon points="0,0 8,0 4.0,5" fill="#d8d8d8"/></svg><svg class="s" style="left:1246px;top:77px;" width="44" height="44" viewBox="0 0 44 44"><rect x="1" y="1" width="25.5" height="35" fill="#dcdcdc" stroke="#bdbdbd" stroke-width="0.8"/><rect x="4" y="3.5" width="17" height="13" fill="#7cc4f6" stroke="#3b4453" stroke-width="0.8"/><path d="M5 22 H20 M5 28.5 H17" stroke="#8a8a8a" stroke-width="1"/><path d="M7.5 20 V24 M16.5 26.5 V30.5" stroke="#555" stroke-width="1.5"/><polygon points="20.1,30.1 26.3,25.6 36.5,37.6 32.1,41.2" fill="#f6c86a"/><polygon points="26.3,25.6 31,21 33.5,23.5 37,19.5 40.5,23 37,26.5 39.5,29.5 35.5,33" fill="#f0f0f0"/></svg><div class="t" style="left:1245.50px;top:125.00px;font-size:16px;line-height:16px;color:#f4f4f4;font-weight:normal;font-style:normal;font-family:'Liberation Sans', sans-serif;transform:scaleX(0.9289);">Match</div><div class="t" style="left:1232.60px;top:145.00px;font-size:16px;line-height:16px;color:#f4f4f4;font-weight:normal;font-style:normal;font-family:'Liberation Sans', sans-serif;transform:scaleX(0.9108);">Properties</div><svg class="s" style="left:1306px;top:80px;" width="20" height="20" viewBox="0 0 20 20"><path d="M10 10 L10.00 0.00 A10 10 0 0 1 18.66 5.00 Z" fill="#f28b30"/><path d="M10 10 L18.66 5.00 A10 10 0 0 1 18.66 15.00 Z" fill="#e85050"/><path d="M10 10 L18.66 15.00 A10 10 0 0 1 10.00 20.00 Z" fill="#8a50e0"/><path d="M10 10 L10.00 20.00 A10 10 0 0 1 1.34 15.00 Z" fill="#3090e0"/><path d="M10 10 L1.34 15.00 A10 10 0 0 1 1.34 5.00 Z" fill="#40c090"/><path d="M10 10 L1.34 5.00 A10 10 0 0 1 10.00 0.00 Z" fill="#f0c040"/></svg><svg class="s" style="left:1306px;top:111px;" width="20" height="20" viewBox="0 0 20 20"><rect x="0" y="0.5" width="20" height="1.5" fill="#e0e0e0"/><rect x="0" y="4.5" width="20" height="3" fill="#e0e0e0"/><rect x="0" y="10" width="20" height="3.5" fill="#e0e0e0"/><rect x="0" y="15.5" width="20" height="4.5" fill="#e0e0e0"/></svg><svg class="s" style="left:1306px;top:143px;" width="20" height="17" viewBox="0 0 20 17"><path d="M0 1 H20 M0 5 H20 M0 9 H20 M0 13 H20 M0 16 H20" stroke="#c8c8c8" stroke-width="1.2" stroke-dasharray="3 1.5"/></svg><div class="b" style="left:1329px;top:76.5px;width:171px;height:27.0px;background:#4b5669;border:1px solid #2b313c;box-sizing:border-box;"></div><svg class="s" style="left:1487.5px;top:87.0px;" width="10" height="5" viewBox="0 0 10 5"><polygon points="0,0 10,0 5.0,5" fill="#e0e0e0"/></svg><div class="b" style="left:1329px;top:107.5px;width:171px;height:27.0px;background:#4b5669;border:1px solid #2b313c;box-sizing:border-box;"></div><svg class="s" style="left:1487.5px;top:118.0px;" width="10" height="5" viewBox="0 0 10 5"><polygon points="0,0 10,0 5.0,5" fill="#e0e0e0"/></svg><div class="b" style="left:1329px;top:138.5px;width:171px;height:27.0px;background:#4b5669;border:1px solid #2b313c;box-sizing:border-box;"></div><svg class="s" style="left:1487.5px;top:149.0px;" width="10" height="5" viewBox="0 0 10 5"><polygon points="0,0 10,0 5.0,5" fill="#e0e0e0"/></svg><div class="b" style="left:1338px;top:80px;width:20px;height:20px;background:#00e400;border:1.3px solid #d8d8d8;box-sizing:border-box;"></div><div class="t" style="left:1363.60px;top:83.00px;font-size:16px;line-height:16px;color:#f4f4f4;font-weight:normal;font-style:normal;font-family:'Liberation Sans', sans-serif;transform:scaleX(0.8586);">ByLayer</div><div class="b" style="left:1338px;top:120px;width:80px;height:1px;background:#f0f0f0;"></div><div class="t" style="left:1420.60px;top:114.00px;font-size:16px;line-height:16px;color:#f4f4f4;font-weight:normal;font-style:normal;font-family:'Liberation Sans', sans-serif;transform:scaleX(0.8518);">ByLayer</div><div class="b" style="left:1338px;top:152px;width:80px;height:1px;background:#f0f0f0;"></div><div class="t" style="left:1420.60px;top:145.00px;font-size:16px;line-height:16px;color:#f4f4f4;font-weight:normal;font-style:normal;font-family:'Liberation Sans', sans-serif;transform:scaleX(0.8518);">ByLayer</div><svg class="s" style="left:1509px;top:77px;" width="42" height="42" viewBox="0 0 42 42"><path d="M6.4 7.5 H2.3 V40.4 H6.4 M28.6 22.7 V40.4 H24.2" fill="none" stroke="#d8d8d8" stroke-width="1.3"/><rect x="9.1" y="12.2" width="12.8" height="9.4" fill="#4d7aa6" stroke="#6fc0f5" stroke-width="1.1"/><circle cx="15.5" cy="31.6" r="6.4" fill="#6a6e76" stroke="#d0d0d0" stroke-width="1.1"/><polygon points="29.9,1.3 31.7,7.5 37.3,4.3 34.1,9.9 40.3,11.7 34.1,13.5 37.3,19.1 31.7,15.9 29.9,22.1 28.1,15.9 22.5,19.1 25.7,13.5 19.5,11.7 25.7,9.9 22.5,4.3 28.1,7.5" fill="#f6c86a"/></svg><div class="t" style="left:1509.30px;top:124.00px;font-size:16px;line-height:16px;color:#f4f4f4;font-weight:normal;font-style:normal;font-family:'Liberation Sans', sans-serif;transform:scaleX(0.9034);">Group</div><svg class="s" style="left:1559px;top:80px;" width="21" height="21" viewBox="0 0 21 21"><path d="M13 1 H15 V19 H13" fill="none" stroke="#d8d8d8" stroke-width="1.1"/><rect x="1" y="2" width="8" height="6" fill="#4d7aa6" stroke="#6fc0f5" stroke-width="1"/><circle cx="5" cy="13.5" r="3.5" fill="#6a6e76" stroke="#c8c8c8" stroke-width="1"/><path d="M13 8 L19.5 14.5 M19.5 8 L13 14.5" stroke="#f04050" stroke-width="1.8"/></svg><svg class="s" style="left:1558px;top:111px;" width="22" height="21" viewBox="0 0 22 21"><path d="M3 1 H1 V18 H3 M11 1 H13 V10" fill="none" stroke="#d8d8d8" stroke-width="1.1"/><rect x="4" y="3" width="6" height="5" fill="#4d7aa6" stroke="#6fc0f5" stroke-width="1"/><circle cx="7" cy="12.5" r="3" fill="#6a6e76" stroke="#c8c8c8" stroke-width="1"/><path d="M11 19 L18 11 L20.5 13.5 L13 21 Z" fill="#f6c86a"/><path d="M18 11 L19.5 9.5 L22 12 L20.5 13.5Z" fill="#e8505a"/></svg><div class="b" style="left:1555px;top:138px;width:29px;height:27px;background:#3f5670;border:1.2px solid #5ab8f5;box-sizing:border-box;"></div><svg class="s" style="left:1560px;top:142px;" width="20" height="20" viewBox="0 0 20 20"><path d="M3 1 H1 V18 H3 M11 1 H13 V6" fill="none" stroke="#d8d8d8" stroke-width="1.1"/><rect x="4" y="3" width="6" height="5" fill="none" stroke="#5fd080" stroke-width="1.1"/><circle cx="7" cy="12.5" r="3" fill="none" stroke="#5fd080" stroke-width="1.1"/><path d="M11 9 V20 L13.5 17.5 L16 21 L17.5 20 L15 16.5 H19 Z" fill="#f0f0f0"/></svg><svg class="s" style="left:1615px;top:93px;" width="36" height="9" viewBox="0 0 36 9"><rect x="0" y="1" width="36" height="8" fill="#f0c868"/><rect x="2.0" y="0" width="1.1" height="4" fill="#3b4453"/><rect x="5.2" y="0" width="1.1" height="3" fill="#3b4453"/><rect x="8.4" y="0" width="1.1" height="4" fill="#3b4453"/><rect x="11.6" y="0" width="1.1" height="3" fill="#3b4453"/><rect x="14.8" y="0" width="1.1" height="4" fill="#3b4453"/><rect x="18.0" y="0" width="1.1" height="3" fill="#3b4453"/><rect x="21.2" y="0" width="1.1" height="4" fill="#3b4453"/><rect x="24.4" y="0" width="1.1" height="3" fill="#3b4453"/><rect x="27.6" y="0" width="1.1" height="4" fill="#3b4453"/><rect x="30.8" y="0" width="1.1" height="3" fill="#3b4453"/><rect x="34.0" y="0" width="1.1" height="4" fill="#3b4453"/></svg><div class="t" style="left:1605.40px;top:126.00px;font-size:16px;line-height:16px;color:#f4f4f4;font-weight:normal;font-style:normal;font-family:'Liberation Sans', sans-serif;transform:scaleX(0.8892);">Measure</div><svg class="s" style="left:1628.5px;top:146.2px;" width="9" height="5" viewBox="0 0 9 5"><polygon points="0,0 9,0 4.5,5" fill="#d8d8d8"/></svg><svg class="s" style="left:1679px;top:79px;" width="23" height="23" viewBox="0 0 23 23"><polygon points="9,0 4,6 7.5,6 5,11 11,5 8,5 11,0" fill="#f6c86a"/><path d="M1 6 V18 L3.5 15.5 L6 20 L7.5 19 L5 14.5 H9 Z" fill="#f0f0f0"/><rect x="8" y="9" width="13" height="12" fill="#e8e8e8"/><path d="M11 12 H18 M11 15 H18 M11 18 H18" stroke="#3a90e0" stroke-width="1.3" stroke-dasharray="1 1 6 0"/></svg><svg class="s" style="left:1679px;top:110px;" width="21" height="21" viewBox="0 0 21 21"><rect x="0.5" y="0.5" width="18" height="17" fill="none" stroke="#40c070" stroke-width="1" stroke-dasharray="2 1"/><rect x="3" y="6" width="10" height="9" fill="#4aa870"/><rect x="6" y="3" width="10" height="9" fill="#6fd090"/><path d="M12 9 V20 L14.5 17.5 L17 21 L18.5 20 L16 16.5 H20 Z" fill="#f0f0f0"/></svg><svg class="s" style="left:1681px;top:141px;" width="17" height="21" viewBox="0 0 17 21"><rect x="0.5" y="0.5" width="15" height="20" rx="1" fill="#d4d4d4"/><rect x="2.5" y="2.5" width="11" height="4" fill="#555"/><rect x="2.5" y="9.0" width="2.6" height="2.4" fill="#555"/><rect x="2.5" y="12.6" width="2.6" height="2.4" fill="#555"/><rect x="2.5" y="16.2" width="2.6" height="2.4" fill="#555"/><rect x="6.5" y="9.0" width="2.6" height="2.4" fill="#555"/><rect x="6.5" y="12.6" width="2.6" height="2.4" fill="#555"/><rect x="6.5" y="16.2" width="2.6" height="2.4" fill="#555"/><rect x="10.5" y="9.0" width="2.6" height="2.4" fill="#555"/><rect x="10.5" y="12.6" width="2.6" height="2.4" fill="#555"/><rect x="10.5" y="16.2" width="2.6" height="2.4" fill="#555"/></svg><svg class="s" style="left:1726px;top:78px;" width="34" height="42" viewBox="0 0 34 42"><rect x="1" y="4.5" width="27" height="32" fill="#d8a868"/><rect x="8" y="1.5" width="13" height="6" rx="2" fill="#f0f0f0"/><path d="M9 13 H26 L33 20 V41 H9 Z" fill="#d8d8d8"/><path d="M26 13 V20 H33" fill="#f0f0f0"/></svg><div class="t" style="left:1726.60px;top:126.00px;font-size:16px;line-height:16px;color:#f4f4f4;font-weight:normal;font-style:normal;font-family:'Liberation Sans', sans-serif;transform:scaleX(0.8093);">Paste</div><svg class="s" style="left:1738.5px;top:147.0px;" width="9" height="5" viewBox="0 0 9 5"><polygon points="0,0 9,0 4.5,5" fill="#d8d8d8"/></svg><svg class="s" style="left:1778px;top:79px;" width="22" height="22" viewBox="0 0 22 22"><rect x="0.5" y="0.5" width="15" height="17" fill="#d4d4d4"/><path d="M3 4 H12 M3 7 H12 M3 10 H9" stroke="#888" stroke-width="1"/><path d="M9 6 L17 17 M17 6 L10 17" stroke="#f0f0f0" stroke-width="1.4"/><circle cx="10" cy="19" r="2.5" fill="#3b4453" stroke="#f0f0f0" stroke-width="1.2"/><circle cx="17.5" cy="19" r="2.5" fill="#3b4453" stroke="#f0f0f0" stroke-width="1.2"/></svg><svg class="s" style="left:1805.0px;top:88.3px;" width="8" height="5" viewBox="0 0 8 5"><polygon points="0,0 8,0 4.0,5" fill="#d8d8d8"/></svg><svg class="s" style="left:1780px;top:110px;" width="19" height="22" viewBox="0 0 19 22"><path d="M0.5 0.5 H8 L11 3.5 V16 H0.5 Z" fill="#b8b8b8"/><path d="M5 4.5 H13 L17.5 9 V21 H5 Z" fill="#d8d8d8" stroke="#3b4453" stroke-width="0.8"/></svg><svg class="s" style="left:1805.0px;top:119.3px;" width="8" height="5" viewBox="0 0 8 5"><polygon points="0,0 8,0 4.0,5" fill="#d8d8d8"/></svg><svg class="s" style="left:1841px;top:82px;" width="42" height="31" viewBox="0 0 42 31"><path d="M0.5 0.5 H18 V13 H40.5 V30.5 H0.5 Z" fill="#d8d8d8"/></svg><div class="t" style="left:1846.80px;top:126.00px;font-size:16px;line-height:16px;color:#f4f4f4;font-weight:normal;font-style:normal;font-family:'Liberation Sans', sans-serif;transform:scaleX(0.8247);">Base</div><svg class="s" style="left:1857.5px;top:145.5px;" width="9" height="5" viewBox="0 0 9 5"><polygon points="0,0 9,0 4.5,5" fill="#d8d8d8"/></svg><svg class="s" style="left:26px;top:204px;" width="22" height="16" viewBox="0 0 22 16"><rect x="0.5" y="0.5" width="20.5" height="2.6" fill="#e6e6e6"/><rect x="0.5" y="6.7" width="20.5" height="2.6" fill="#e6e6e6"/><rect x="0.5" y="12.9" width="20.5" height="2.6" fill="#e6e6e6"/></svg><svg class="s" style="left:60.5px;top:204px;" width="9" height="19" viewBox="0 0 9 19"><path d="M8 1 L1 18" stroke="#596273" stroke-width="1.3"/></svg><svg class="s" style="left:364.5px;top:204px;" width="9" height="19" viewBox="0 0 9 19"><path d="M8 1 L1 18" stroke="#596273" stroke-width="1.3"/></svg><div class="t" style="left:79.40px;top:205.00px;font-size:16px;line-height:16px;color:#e0e3e8;font-weight:normal;font-style:normal;font-family:'Liberation Sans', sans-serif;transform:scaleX(0.8964);">Start</div><svg class="s" style="left:0;top:0" width="400" height="240" viewBox="0 0 400 240"><polygon points="130.5,197 321.7,197 310,227 119,227" fill="#3b4453"/></svg><div class="t" style="left:140.40px;top:205.00px;font-size:16px;line-height:16px;color:#ffffff;font-weight:bold;font-style:normal;font-family:'Liberation Sans', sans-serif;transform:scaleX(0.9129);">figuras geometricas*</div><svg class="s" style="left:296px;top:206px;" width="12" height="12" viewBox="0 0 12 12"><path d="M1 1 L11 11 M11 1 L1 11" stroke="#b4b8c0" stroke-width="2"/></svg><svg class="s" style="left:333px;top:203px;" width="19" height="19" viewBox="0 0 19 19"><path d="M9.5 0.5 V18.5 M0.5 9.5 H18.5" stroke="#e4e4e4" stroke-width="2.6"/></svg><svg class="s" style="left:26px;top:986px;" width="21" height="17" viewBox="0 0 21 17"><rect x="0.5" y="0.5" width="20" height="2.6" fill="#e6e6e6"/><rect x="0.5" y="7" width="20" height="2.6" fill="#e6e6e6"/><rect x="0.5" y="13.5" width="20" height="2.6" fill="#e6e6e6"/></svg><svg class="s" style="left:0;top:970" width="200" height="43" viewBox="0 970 200 43"><polygon points="68.5,979 143.7,979 133.7,1008.6 58.5,1008.6" fill="#3b4453"/></svg><div class="t" style="left:79.20px;top:987.00px;font-size:16px;line-height:16px;color:#ffffff;font-weight:bold;font-style:normal;font-family:'Liberation Sans', sans-serif;transform:scaleX(0.9481);">Model</div><div class="t" style="left:153.00px;top:987.00px;font-size:16px;line-height:16px;color:#e0e3e8;font-weight:normal;font-style:normal;font-family:'Liberation Sans', sans-serif;transform:scaleX(0.8963);">Layout1</div><svg class="s" style="left:215.5px;top:985px;" width="9" height="19" viewBox="0 0 9 19"><path d="M8 1 L1 18" stroke="#596273" stroke-width="1.3"/></svg><svg class="s" style="left:268.5px;top:985px;" width="9" height="19" viewBox="0 0 9 19"><path d="M8 1 L1 18" stroke="#596273" stroke-width="1.3"/></svg><svg class="s" style="left:238px;top:985px;" width="19" height="19" viewBox="0 0 19 19"><path d="M9.5 0.5 V18.5 M0.5 9.5 H18.5" stroke="#e4e4e4" stroke-width="2.6"/></svg><div class="b" style="left:1169px;top:981px;width:59px;height:30px;background:#3b4453;"></div><div class="b" style="left:1231px;top:981px;width:80px;height:30px;background:#3b4453;"></div><div class="b" style="left:1314px;top:981px;width:29.5px;height:30px;background:#3b4453;"></div><div class="b" style="left:1345px;top:981px;width:130px;height:30px;background:#3b4453;"></div><div class="b" style="left:1476px;top:981px;width:80px;height:30px;background:#3b4453;"></div><div class="b" style="left:1559.8px;top:981px;width:131.0px;height:30px;background:#3b4453;"></div><div class="b" style="left:1693.9px;top:981px;width:49.59999999999991px;height:30px;background:#3b4453;"></div><div class="b" style="left:1745px;top:981px;width:30px;height:30px;background:#3b4453;"></div><div class="b" style="left:1778px;top:981px;width:31px;height:30px;background:#3b4453;"></div><div class="b" style="left:1812px;top:981px;width:33.59999999999991px;height:30px;background:#3b4453;"></div><div class="b" style="left:1849px;top:981px;width:29.799999999999955px;height:30px;background:#3b4453;"></div><div class="b" style="left:1881px;top:981px;width:30px;height:30px;background:#3b4453;"></div><div class="b" style="left:1231.8px;top:982px;width:28.200000000000045px;height:28px;background:#5b8cc2;"></div><div class="b" style="left:1376px;top:982px;width:27.700000000000045px;height:28px;background:#5b8cc2;"></div><div class="b" style="left:1476.9px;top:982px;width:27.899999999999864px;height:28px;background:#5b8cc2;"></div><div class="b" style="left:1506.8px;top:982px;width:28.200000000000045px;height:28px;background:#5b8cc2;"></div><div class="b" style="left:1559.8px;top:982px;width:28.200000000000045px;height:28px;background:#5b8cc2;"></div><div class="t" style="left:1173.80px;top:989.00px;font-size:16px;line-height:16px;color:#f4f4f4;font-weight:normal;font-style:normal;font-family:'Liberation Sans', sans-serif;transform:scaleX(0.8805);">MODEL</div><svg class="s" style="left:1235px;top:985px;" width="21" height="21" viewBox="0 0 21 21"><path d="M4.5 0.5 V20 M10.5 0.5 V20 M16 0.5 V20 M0.5 4.5 H20 M0.5 10 H20 M0.5 15.5 H20" stroke="#ffffff" stroke-width="1.4"/></svg><svg class="s" style="left:1267px;top:987px;" width="17" height="17" viewBox="0 0 17 17"><rect x="1.0" y="1.0" width="3" height="3" fill="#d8d8d8"/><rect x="1.0" y="6.8" width="3" height="3" fill="#d8d8d8"/><rect x="1.0" y="12.6" width="3" height="3" fill="#d8d8d8"/><rect x="6.8" y="1.0" width="3" height="3" fill="#d8d8d8"/><rect x="6.8" y="6.8" width="3" height="3" fill="#d8d8d8"/><rect x="6.8" y="12.6" width="3" height="3" fill="#d8d8d8"/><rect x="12.6" y="1.0" width="3" height="3" fill="#d8d8d8"/><rect x="12.6" y="6.8" width="3" height="3" fill="#d8d8d8"/><rect x="12.6" y="12.6" width="3" height="3" fill="#d8d8d8"/></svg><svg class="s" style="left:1296.0px;top:993.5px;" width="10" height="5" viewBox="0 0 10 5"><polygon points="0,0 10,0 5.0,5" fill="#d8d8d8"/></svg><svg class="s" style="left:1318px;top:987px;" width="22" height="18" viewBox="0 0 22 18"><path d="M5 1 V10 M0.5 5.5 H9.5" stroke="#d8d8d8" stroke-width="1.3"/><rect x="8" y="10.5" width="13" height="6" rx="1" fill="#d8d8d8"/><rect x="9" y="11.5" width="3" height="4" fill="#3b4453"/></svg><svg class="s" style="left:1349px;top:985px;" width="22" height="20" viewBox="0 0 22 20"><path d="M1.5 0.5 V19 H21" stroke="#d8d8d8" stroke-width="1.3" fill="none"/><path d="M1.5 13 H7 V19" stroke="#d8d8d8" stroke-width="1" fill="none"/></svg><svg class="s" style="left:1378px;top:985px;" width="23" height="20" viewBox="0 0 23 20"><circle cx="9" cy="11" r="7.5" fill="none" stroke="#eaeaea" stroke-width="1.3"/><path d="M9 11 L19 3 M9 11 H21" stroke="#eaeaea" stroke-width="1.3"/></svg><svg class="s" style="left:1410.0px;top:993.5px;" width="10" height="5" viewBox="0 0 10 5"><polygon points="0,0 10,0 5.0,5" fill="#d8d8d8"/></svg><svg class="s" style="left:1430px;top:985px;" width="19" height="21" viewBox="0 0 19 21"><path d="M1 2 L18 19" stroke="#e04848" stroke-width="1.3"/><path d="M9.5 0.5 V20.5" stroke="#40c050" stroke-width="1.3"/><rect x="7.5" y="8.5" width="4" height="4" fill="#3b4453" stroke="#e8e8e8" stroke-width="1"/></svg><svg class="s" style="left:1460.0px;top:993.5px;" width="10" height="5" viewBox="0 0 10 5"><polygon points="0,0 10,0 5.0,5" fill="#d8d8d8"/></svg><svg class="s" style="left:1479px;top:986px;" width="23" height="19" viewBox="0 0 23 19"><path d="M1 17.5 H21 M2 17 L19 3" stroke="#eaeaea" stroke-width="1.3"/><rect x="9" y="8.5" width="4" height="4" fill="#eaeaea"/></svg><svg class="s" style="left:1509px;top:985px;" width="24" height="21" viewBox="0 0 24 21"><rect x="5" y="5" width="17" height="15" fill="none" stroke="#eaeaea" stroke-width="1.4"/><rect x="1" y="1" width="7" height="7" fill="#5b8cc2" stroke="#eaeaea" stroke-width="1.3"/></svg><svg class="s" style="left:1541.0px;top:993.5px;" width="10" height="5" viewBox="0 0 10 5"><polygon points="0,0 10,0 5.0,5" fill="#d8d8d8"/></svg><svg class="s" style="left:1562px;top:985px;" width="24" height="22" viewBox="0 0 24 22"><path d="M10.5 1 L13.0 9.5 L12.5 11 L19.3 20.8 L10.5 16 L2.0999999999999996 20.8 L8.5 11 L8.0 9.5 Z" fill="#ffffff"/><circle cx="18.2" cy="5" r="3.6" fill="none" stroke="#f4f4f4" stroke-width="1.2"/></svg><svg class="s" style="left:1593px;top:985px;" width="22" height="22" viewBox="0 0 22 22"><path d="M9.5 1 L12.0 9.5 L11.5 11 L18.3 20.8 L9.5 16 L1.0999999999999996 20.8 L7.5 11 L7.0 9.5 Z" fill="#d8d8d8"/><path d="M18.5 1.5 L15 6.5 H18 L15.5 10" stroke="#d8d8d8" stroke-width="1.6" fill="none"/></svg><svg class="s" style="left:1623px;top:985px;" width="22" height="22" viewBox="0 0 22 22"><path d="M10.4 1 L12.9 9.5 L12.4 11 L19.200000000000003 20.8 L10.4 16 L2.0 20.8 L8.4 11 L7.9 9.5 Z" fill="#d8d8d8"/></svg><div class="t" style="left:1655.00px;top:989.00px;font-size:16px;line-height:16px;color:#f4f4f4;font-weight:normal;font-style:normal;font-family:'Liberation Sans', sans-serif;transform:scaleX(0.7500);">1:1</div><svg class="s" style="left:1676.0px;top:993.5px;" width="10" height="5" viewBox="0 0 10 5"><polygon points="0,0 10,0 5.0,5" fill="#d8d8d8"/></svg><svg class="s" style="left:1698px;top:985px;" width="21" height="21" viewBox="0 0 21 21"><rect x="8.5" y="0" width="4" height="5" fill="#d8d8d8" transform="rotate(0 10.5 10.5)"/><rect x="8.5" y="0" width="4" height="5" fill="#d8d8d8" transform="rotate(45 10.5 10.5)"/><rect x="8.5" y="0" width="4" height="5" fill="#d8d8d8" transform="rotate(90 10.5 10.5)"/><rect x="8.5" y="0" width="4" height="5" fill="#d8d8d8" transform="rotate(135 10.5 10.5)"/><rect x="8.5" y="0" width="4" height="5" fill="#d8d8d8" transform="rotate(180 10.5 10.5)"/><rect x="8.5" y="0" width="4" height="5" fill="#d8d8d8" transform="rotate(225 10.5 10.5)"/><rect x="8.5" y="0" width="4" height="5" fill="#d8d8d8" transform="rotate(270 10.5 10.5)"/><rect x="8.5" y="0" width="4" height="5" fill="#d8d8d8" transform="rotate(315 10.5 10.5)"/><circle cx="10.5" cy="10.5" r="7.5" fill="#d8d8d8"/><circle cx="10.5" cy="10.5" r="3.2" fill="#3b4453"/></svg><svg class="s" style="left:1729.0px;top:993.5px;" width="10" height="5" viewBox="0 0 10 5"><polygon points="0,0 10,0 5.0,5" fill="#d8d8d8"/></svg><svg class="s" style="left:1750px;top:986px;" width="20" height="19" viewBox="0 0 20 19"><path d="M10 0.5 V18.5 M0.5 9.5 H19.5" stroke="#e4e4e4" stroke-width="2.6"/></svg><svg class="s" style="left:1782px;top:986px;" width="22" height="20" viewBox="0 0 22 20"><rect x="1" y="1" width="7" height="7" fill="none" stroke="#d8d8d8" stroke-width="1.2"/><circle cx="16" cy="9.5" r="4.5" fill="none" stroke="#d8d8d8" stroke-width="1.2"/><path d="M8 12.5 L12.5 19 H3.5 Z" fill="none" stroke="#d8d8d8" stroke-width="1.2"/></svg><svg class="s" style="left:1815px;top:983px;" width="27" height="25" viewBox="0 0 27 25"><path d="M2 3 H18 L24 9 V16 H2 Z" fill="#3a6fb8"/><path d="M6 1 V14 M1 7 H14" stroke="#f0f0f0" stroke-width="1.2"/><circle cx="6" cy="7" r="1.8" fill="#f0f0f0"/><rect x="1" y="14" width="11" height="7" fill="#f0b030"/><path d="M12 17 L16 21 L25 11" stroke="#40c050" stroke-width="2.6" fill="none"/></svg><svg class="s" style="left:1853px;top:988px;" width="22" height="15" viewBox="0 0 22 15"><rect x="0.5" y="0.5" width="20" height="13.5" fill="none" stroke="#d8d8d8" stroke-width="1.2"/><path d="M12 6 L17 2.5 M14 2.5 H17 V5.5 M9 8 L4 11.5 M4 8.5 V11.5 H7" stroke="#d8d8d8" stroke-width="1.1" fill="none"/></svg><svg class="s" style="left:1885px;top:986px;" width="22" height="18" viewBox="0 0 22 18"><rect x="0.5" y="0.5" width="20" height="2.6" fill="#e6e6e6"/><rect x="0.5" y="7.5" width="20" height="2.6" fill="#e6e6e6"/><rect x="0.5" y="14.5" width="20" height="2.6" fill="#e6e6e6"/></svg><svg class="s" style="left:0;top:0" width="1915" height="1013" viewBox="0 0 1915 1013"><rect x="130" y="232" width="1" height="742" fill="#101217"/><rect x="293" y="232" width="1" height="742" fill="#101217"/><rect x="457" y="232" width="1" height="742" fill="#101217"/><rect x="620" y="232" width="1" height="742" fill="#101217"/><rect x="784" y="232" width="1" height="742" fill="#101217"/><rect x="947" y="232" width="1" height="742" fill="#101217"/><rect x="1110" y="232" width="1" height="742" fill="#101217"/><rect x="1274" y="232" width="1" height="742" fill="#101217"/><rect x="1437" y="232" width="1" height="742" fill="#101217"/><rect x="1601" y="232" width="1" height="742" fill="#101217"/><rect x="1764" y="232" width="1" height="742" fill="#101217"/><rect x="7" y="270" width="1906" height="1" fill="#101217"/><rect x="7" y="433" width="1906" height="1" fill="#101217"/><rect x="7" y="596" width="1906" height="1" fill="#101217"/><rect x="7" y="760" width="1906" height="1" fill="#101217"/><rect x="7" y="923" width="1906" height="1" fill="#101217"/><line x1="784.5" y1="232" x2="784.5" y2="760" stroke="#2f5a22" stroke-width="1"/><line x1="784" y1="760.5" x2="1913" y2="760.5" stroke="#5e1d1d" stroke-width="1"/><rect x="784.5" y="433.5" width="326.5" height="326.5" fill="none" stroke="#b81c10" stroke-width="1.2"/><line x1="715.8" y1="433.5" x2="715.8" y2="760" stroke="#1010f0" stroke-width="1.2"/><line x1="1178.3" y1="433.5" x2="1178.3" y2="760" stroke="#1010f0" stroke-width="1.2"/><circle cx="947.4" cy="596.7" r="163.3" fill="none" stroke="#e0d000" stroke-width="1.3"/><polygon points="784.3,691.3 1110.6,691.3 947.4,408.2" fill="none" stroke="#00d800" stroke-width="1.3"/><rect x="683.5" y="433.5" width="528" height="326.5" fill="none" stroke="#f000f0" stroke-width="1.3"/><polygon points="947.4,318.6 1211.6,510.6 1110.7,821.1 784.1,821.1 683.2,510.6" fill="none" stroke="#00c8dc" stroke-width="1.3"/><line x1="1554" y1="759.5" x2="1651" y2="759.5" stroke="#e8e400" stroke-width="1.6"/><line x1="1602.5" y1="711" x2="1602.5" y2="808" stroke="#e8e400" stroke-width="1.6"/><rect x="1600.5" y="756.5" width="4" height="6" fill="none" stroke="#e8e400" stroke-width="1"/></svg><div class="t" style="left:10.40px;top:242.00px;font-size:14px;line-height:14px;color:#b0b0b0;font-weight:normal;font-style:normal;font-family:'Liberation Sans', sans-serif;transform:scaleX(1.0769);">[</div><div class="b" style="left:17px;top:246px;width:8px;height:2px;background:#f4f4f4;"></div><div class="t" style="left:27.00px;top:242.00px;font-size:14px;line-height:14px;color:#b0b0b0;font-weight:normal;font-style:normal;font-family:'Liberation Sans', sans-serif;transform:scaleX(0.8462);">]</div><div class="t" style="left:32.40px;top:242.00px;font-size:14px;line-height:14px;color:#e4e4e4;font-weight:normal;font-style:normal;font-family:'Liberation Sans', sans-serif;transform:scaleX(1.0683);">[Top][2D Wireframe]</div><svg class="s" style="left:0;top:0" width="1915" height="1013" viewBox="0 0 1915 1013"><circle cx="1827.5" cy="346.5" r="55.2" fill="none" stroke="#2a2a2a" stroke-width="14.3"/><rect x="1801" y="319.5" width="54" height="54" fill="#a3a3a3"/><rect x="1811" y="329.5" width="34" height="34" fill="#8e9296"/></svg><div class="t" style="left:1817.30px;top:339.00px;font-size:15px;line-height:15px;color:#45494e;font-weight:bold;font-style:normal;font-family:'Liberation Sans', sans-serif;transform:scaleX(0.7500);">TOP</div><div class="t" style="left:1821.10px;top:278.00px;font-size:22px;line-height:22px;color:#a3a3a3;font-weight:bold;font-style:normal;font-family:'Liberation Sans', sans-serif;transform:scaleX(0.8553);">N</div><div class="t" style="left:1821.10px;top:396.00px;font-size:22px;line-height:22px;color:#a3a3a3;font-weight:bold;font-style:normal;font-family:'Liberation Sans', sans-serif;transform:scaleX(0.9252);">S</div><div class="t" style="left:1758.30px;top:338.00px;font-size:22px;line-height:22px;color:#a3a3a3;font-weight:bold;font-style:normal;font-family:'Liberation Sans', sans-serif;transform:scaleX(1.0240);">W</div><div class="t" style="left:1879.80px;top:338.00px;font-size:22px;line-height:22px;color:#a3a3a3;font-weight:bold;font-style:normal;font-family:'Liberation Sans', sans-serif;transform:scaleX(0.8844);">E</div><div class="b" style="left:1799px;top:438.5px;width:56px;height:20.0px;background:#8b8d99;border-radius:6px;"></div><div class="t" style="left:1803.00px;top:444.00px;font-size:11px;line-height:11px;color:#62646e;font-weight:normal;font-style:normal;font-family:'Liberation Sans', sans-serif;transform:scaleX(1.2062);">WCS</div><svg class="s" style="left:1840.5px;top:446.0px;" width="9" height="5" viewBox="0 0 9 5"><polygon points="0,0 9,0 4.5,5" fill="#a9abb5"/></svg><div class="b" style="left:1838px;top:251px;width:13px;height:4px;background:#f0f0f0;"></div><svg class="s" style="left:1862px;top:243px;" width="15" height="15" viewBox="0 0 15 15"><rect x="1.5" y="4.5" width="9" height="9" fill="none" stroke="#f0f0f0" stroke-width="2.5"/><path d="M5 1.5 H13.5 V10" fill="none" stroke="#f0f0f0" stroke-width="2"/></svg><svg class="s" style="left:1887px;top:243px;" width="14" height="14" viewBox="0 0 14 14"><path d="M2 2 L12 12 M12 2 L2 12" stroke="#f0f0f0" stroke-width="3"/></svg><div class="b" style="left:398px;top:941px;width:73px;height:33px;background:#232833;border-radius:4px 0 0 0;"></div><div class="b" style="left:470px;top:942px;width:1053px;height:32px;background:#b4b4b4;border-radius:0 4px 4px 0;box-shadow:0 0 1px #202020;"></div><div class="b" style="left:457px;top:942px;width:1px;height:32px;background:rgba(255,255,255,0.05);"></div><div class="b" style="left:620px;top:942px;width:1px;height:32px;background:rgba(255,255,255,0.05);"></div><div class="b" style="left:784px;top:942px;width:1px;height:32px;background:rgba(255,255,255,0.05);"></div><div class="b" style="left:947px;top:942px;width:1px;height:32px;background:rgba(255,255,255,0.05);"></div><div class="b" style="left:1110px;top:942px;width:1px;height:32px;background:rgba(255,255,255,0.05);"></div><div class="b" style="left:1274px;top:942px;width:1px;height:32px;background:rgba(255,255,255,0.05);"></div><div class="b" style="left:1437px;top:942px;width:1px;height:32px;background:rgba(255,255,255,0.05);"></div><div class="t" style="left:516.00px;top:952.00px;font-size:15px;line-height:15px;color:#5c5c5c;font-weight:normal;font-style:italic;font-family:'Liberation Mono', monospace;transform:scaleX(0.9897);">Type a command</div><svg class="s" style="left:402px;top:946px;" width="8" height="23" viewBox="0 0 8 23"><rect x="1" y="1" width="2" height="2" fill="#d0d0d0"/><rect x="1" y="5" width="2" height="2" fill="#d0d0d0"/><rect x="1" y="9" width="2" height="2" fill="#d0d0d0"/><rect x="1" y="13" width="2" height="2" fill="#d0d0d0"/><rect x="1" y="17" width="2" height="2" fill="#d0d0d0"/><rect x="1" y="21" width="2" height="2" fill="#d0d0d0"/><rect x="5" y="1" width="2" height="2" fill="#d0d0d0"/><rect x="5" y="5" width="2" height="2" fill="#d0d0d0"/><rect x="5" y="9" width="2" height="2" fill="#d0d0d0"/><rect x="5" y="13" width="2" height="2" fill="#d0d0d0"/><rect x="5" y="17" width="2" height="2" fill="#d0d0d0"/><rect x="5" y="21" width="2" height="2" fill="#d0d0d0"/></svg><svg class="s" style="left:416px;top:949px;" width="14" height="14" viewBox="0 0 14 14"><path d="M2 2 L12 12 M12 2 L2 12" stroke="#d8d8d8" stroke-width="2.4"/></svg><svg class="s" style="left:443px;top:946px;" width="22" height="22" viewBox="0 0 22 22"><path d="M2.5 19.5 L11 11" stroke="#a0a0a0" stroke-width="3.4" stroke-linecap="round"/><path d="M9.5 12.5 C7 8 9 3 14 2 L12.5 6.5 L15.5 9.5 L20 8 C19 13 14 15 9.5 12.5 Z" fill="#a0a0a0"/></svg><svg class="s" style="left:474px;top:949px;" width="22" height="17" viewBox="0 0 22 17"><rect x="1.5" y="1.5" width="19" height="14" fill="none" stroke="#5c5c5c" stroke-width="1.5"/><rect x="1" y="1" width="20" height="3" fill="#5c5c5c"/><path d="M4 7 L7 9 L4 11 M8 12 H12" stroke="#5c5c5c" stroke-width="1.2" fill="none"/></svg><svg class="s" style="left:497.5px;top:954.5px;" width="10" height="6" viewBox="0 0 10 6"><polygon points="0,0 10,0 5.0,6" fill="#5c5c5c"/></svg><svg class="s" style="left:1507px;top:956px;" width="9.5" height="5" viewBox="0 0 9.5 5"><polygon points="0,5 9.5,5 4.75,0" fill="#4a4a4a"/></svg></body></html>
